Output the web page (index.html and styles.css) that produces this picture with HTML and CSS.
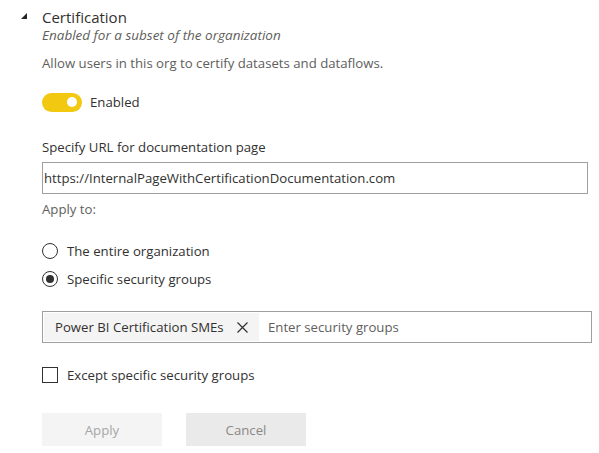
FILE: index.html
```html
<!DOCTYPE html>
<html lang="en">
<head>
<meta charset="utf-8">
<title>Certification settings</title>
<link rel="stylesheet" href="styles.css">
</head>
<body>
<div class="panel">
  <div class="header">
    <svg class="caret" width="6" height="6" viewBox="0 0 6 6" aria-hidden="true"><polygon points="6,0 6,6 0,6" fill="#252423"/></svg>
    <h2 class="title">Certification</h2>
  </div>
  <p class="status">Enabled for a subset of the organization</p>
  <p class="desc">Allow users in this org to certify datasets and dataflows.</p>

  <div class="toggle-row">
    <span class="toggle"><span class="knob"></span></span>
    <span class="toggle-label">Enabled</span>
  </div>

  <div class="field-label">Specify URL for documentation page</div>
  <div class="textbox">https://InternalPageWithCertificationDocumentation.com</div>

  <div class="apply-label">Apply to:</div>
  <div class="radio-row first"><span class="radio"></span><span>The entire organization</span></div>
  <div class="radio-row second"><span class="radio checked"></span><span>Specific security groups</span></div>

  <div class="picker">
    <span class="chip">
      <span class="chip-text">Power BI Certification SMEs</span>
      <svg class="chip-close" width="11" height="11" viewBox="0 0 11 11" aria-hidden="true"><path d="M0.5 0.5 L10.5 10.5 M10.5 0.5 L0.5 10.5" stroke="#323130" stroke-width="1.2" fill="none"/></svg>
    </span>
    <span class="placeholder">Enter security groups</span>
  </div>

  <div class="check-row"><span class="checkbox"></span><span>Except specific security groups</span></div>

  <div class="actions">
    <button class="btn btn-apply" type="button">Apply</button>
    <button class="btn btn-cancel" type="button">Cancel</button>
  </div>
</div>
</body>
</html>
```

FILE: styles.css
```css
* { box-sizing: border-box; }

html, body {
  margin: 0;
  padding: 0;
  background: #ffffff;
}

body {
  font-family: "Open Sans", "Noto Sans", sans-serif;
  font-size: 13.2px;
  line-height: 16px;
  color: #323130;
}

.panel {
  padding: 7px 0 0 42px;
  width: 599px;
}

.header {
  display: flex;
  align-items: center;
  margin-left: -21px;
  gap: 15px;
  height: 20px;
}

.caret {
  display: block;
  margin-top: -3px;
}

.title {
  margin: 0;
  font-size: 15px;
  line-height: 20px;
  font-weight: 400;
  color: #323130;
}

.status {
  margin: 0;
  font-style: italic;
  font-size: 13.5px;
  color: #605e5c;
}

.desc {
  margin: 12px 0 0;
  color: #605e5c;
}

.toggle-row {
  display: flex;
  align-items: center;
  gap: 8px;
  margin-top: 21px;
  height: 20px;
}

.toggle {
  display: flex;
  align-items: center;
  justify-content: flex-end;
  width: 40px;
  height: 19px;
  border-radius: 10px;
  background: #f2c811;
  padding-right: 5px;
}

.knob {
  width: 10px;
  height: 10px;
  border-radius: 50%;
  background: #ffffff;
}

.toggle-label {
  color: #323130;
}

.field-label {
  margin-top: 27px;
  color: #323130;
}

.textbox {
  margin-top: 7px;
  width: 546px;
  height: 32px;
  border: 1px solid #a19f9d;
  padding: 0 0 0 1px;
  display: flex;
  align-items: center;
  color: #323130;
}

.apply-label {
  margin-top: 7px;
  color: #605e5c;
}

.radio-row {
  display: flex;
  align-items: center;
  gap: 9px;
  height: 20px;
  color: #323130;
}

.radio-row.first { margin-top: 24px; }
.radio-row.second { margin-top: 8px; }

.radio {
  flex: none;
  width: 16px;
  height: 16px;
  border-radius: 50%;
  border: 1px solid #323130;
  display: flex;
  align-items: center;
  justify-content: center;
}

.radio.checked::after {
  content: "";
  width: 8px;
  height: 8px;
  border-radius: 50%;
  background: #323130;
}

.picker {
  margin-top: 22px;
  width: 550px;
  height: 32px;
  border: 1px solid #a19f9d;
  padding: 1px;
  display: flex;
  align-items: stretch;
  gap: 9px;
}

.chip {
  display: flex;
  align-items: center;
  justify-content: space-between;
  background: #f4f4f4;
  padding: 0 11px;
  width: 215px;
  color: #323130;
}

.chip-close {
  display: block;
  flex: none;
}

.placeholder {
  display: flex;
  align-items: center;
  color: #605e5c;
}

.check-row {
  display: flex;
  align-items: center;
  gap: 9px;
  height: 20px;
  margin-top: 22px;
  color: #323130;
}

.checkbox {
  flex: none;
  width: 16px;
  height: 16px;
  border: 1px solid #323130;
}

.actions {
  display: flex;
  gap: 24px;
  margin-top: 28px;
}

.btn {
  width: 120px;
  height: 33px;
  border: none;
  font-family: inherit;
  font-size: 13.2px;
  line-height: 16px;
  padding: 0;
}

.btn-apply {
  background: #f4f4f4;
  color: #a6a6a6;
}

.btn-cancel {
  background: #eaeaea;
  color: #8a8886;
}
```
